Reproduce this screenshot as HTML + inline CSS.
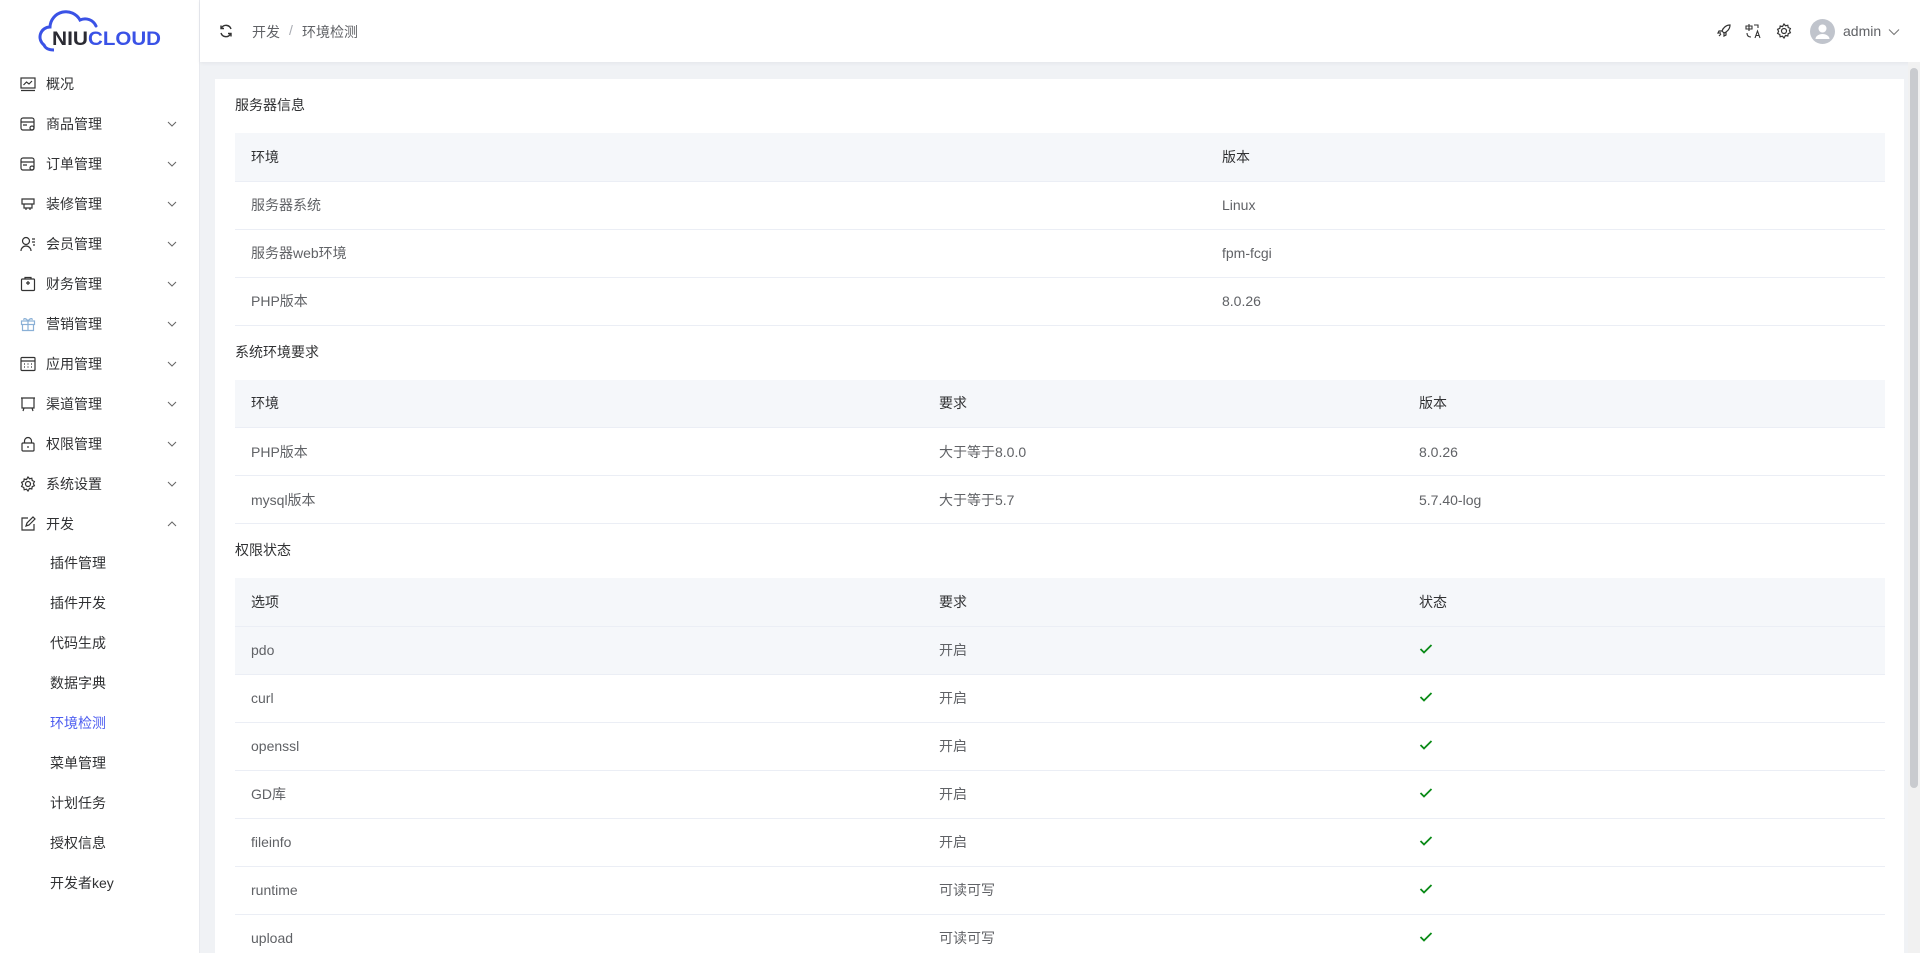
<!DOCTYPE html>
<html style="width:1920px;height:953px;overflow:hidden;background:#f0f2f5"><head><meta charset="utf-8">
<style>
*{box-sizing:border-box;margin:0;padding:0}
body{width:1920px;height:953px;overflow:hidden;background:#f0f2f5;font-family:"Liberation Sans","Noto Sans CJK SC",sans-serif;font-size:14px;color:#606266;position:relative}
.side{position:absolute;left:0;top:0;width:200px;height:953px;background:#fff;border-right:1px solid #e8eaef}
.logo{position:absolute;left:38px;top:10px;width:126px;height:42px}
.mi{position:absolute;left:0;width:199px;height:40px;line-height:40px;color:#303133}
.mi .ic{position:absolute;left:20px;top:12px;width:16px;height:16px}
.mi .t{position:absolute;left:46px}
.mi .ch{position:absolute;left:167px;top:16px;width:10px;height:8px}
.sub{position:absolute;left:50px;height:40px;line-height:40px;color:#303133}
.hdr{position:absolute;left:200px;top:0;width:1720px;height:62px;background:#fff;box-shadow:0 1px 4px rgba(0,21,41,.06)}
.card{position:absolute;left:215px;top:79px;width:1689px;height:874px;background:#fff;padding:0 19px 0 20px}
.st{height:54px;line-height:52px;color:#303133}
table{width:1650px;border-collapse:collapse;table-layout:fixed}
td,th{height:48px;padding:0 16px;text-align:left;font-weight:normal;border-bottom:1px solid #ebeef5;color:#606266}
th{background:#f5f7fa;color:#303133}
tr.hv td{background:#f5f7fa}
.ok{display:inline-block;width:14px;height:12px}
.sb{position:absolute;left:1910px;top:68px;width:8px;height:720px;background:#c9cbcf;border-radius:4px}
.sbt{position:absolute;left:1908px;top:62px;width:12px;height:891px;background:#f1f1f1}
</style></head><body>
<div class="side">
<svg class="logo" viewBox="0 0 126 42"><path d="M6 35 A10 10 0 0 1 12 17 A16 16 0 0 1 42 10 A12 12 0 0 1 58 16" fill="none" stroke="#3a52e6" stroke-width="3" stroke-linecap="round"/><path d="M6 35 Q8 40 16 40" fill="none" stroke="#3a52e6" stroke-width="3"/><text x="14" y="35" font-family="Liberation Sans" font-weight="bold" font-size="19" fill="#2b2b33" textLength="36" lengthAdjust="spacingAndGlyphs">NIU</text><text x="50" y="35" font-family="Liberation Sans" font-weight="bold" font-size="19" fill="#3a52e6" textLength="73" lengthAdjust="spacingAndGlyphs">CLOUD</text></svg>

<div class="mi" style="top:64px"><svg class="ic" viewBox="0 0 16 16" fill="none" stroke="#333" stroke-width="1.2"><rect x="1" y="2" width="14" height="10"/><path d="M1 14.5h14M3.5 9l3-3 2.5 2 3-3"/></svg><span class="t">概况</span></div>
<div class="mi" style="top:104px"><svg class="ic" viewBox="0 0 16 16" fill="none" stroke="#333" stroke-width="1.2"><rect x="1" y="2" width="13" height="12" rx="2"/><path d="M1 6h13M3 9h4"/><circle cx="12" cy="12" r="2"/></svg><span class="t">商品管理</span><svg class="ch" viewBox="0 0 10 8"><path d="M1 2l4 4 4-4" fill="none" stroke="#666"/></svg></div>
<div class="mi" style="top:144px"><svg class="ic" viewBox="0 0 16 16" fill="none" stroke="#333" stroke-width="1.2"><rect x="1" y="2" width="13" height="12" rx="2"/><path d="M1 6h13M3 9h4"/><circle cx="12" cy="12" r="2"/></svg><span class="t">订单管理</span><svg class="ch" viewBox="0 0 10 8"><path d="M1 2l4 4 4-4" fill="none" stroke="#666"/></svg></div>
<div class="mi" style="top:184px"><svg class="ic" viewBox="0 0 16 16" fill="none" stroke="#333" stroke-width="1.2"><path d="M2 3h12v5H2zM4 8v4h8V8M6 12v2M10 12v2"/></svg><span class="t">装修管理</span><svg class="ch" viewBox="0 0 10 8"><path d="M1 2l4 4 4-4" fill="none" stroke="#666"/></svg></div>
<div class="mi" style="top:224px"><svg class="ic" viewBox="0 0 16 16" fill="none" stroke="#333" stroke-width="1.2"><circle cx="6" cy="5" r="3.5"/><path d="M1 15a5 5 0 0 1 10 0M12 3h3M12 6h3M13 9h2"/></svg><span class="t">会员管理</span><svg class="ch" viewBox="0 0 10 8"><path d="M1 2l4 4 4-4" fill="none" stroke="#666"/></svg></div>
<div class="mi" style="top:264px"><svg class="ic" viewBox="0 0 16 16" fill="none" stroke="#333" stroke-width="1.2"><rect x="1.5" y="3" width="13" height="11.5" rx="1"/><path d="M5 3V1.5h6V3M8 5v4M6 7h4"/></svg><span class="t">财务管理</span><svg class="ch" viewBox="0 0 10 8"><path d="M1 2l4 4 4-4" fill="none" stroke="#666"/></svg></div>
<div class="mi" style="top:304px"><svg class="ic" viewBox="0 0 16 16" fill="none" stroke="#8ab0d6" stroke-width="1.2"><rect x="1.5" y="5" width="13" height="3.5"/><path d="M2.5 8.5v6h11v-6M8 5v9.5M8 5C6 2 3 2 4 4M8 5c2-3 5-3 4-1"/></svg><span class="t">营销管理</span><svg class="ch" viewBox="0 0 10 8"><path d="M1 2l4 4 4-4" fill="none" stroke="#666"/></svg></div>
<div class="mi" style="top:344px"><svg class="ic" viewBox="0 0 16 16" fill="none" stroke="#333" stroke-width="1.2"><rect x="1" y="1.5" width="14" height="13" rx="1"/><path d="M1 5h14M4 8h1M7.5 8h1M11 8h1M4 11h1M7.5 11h1M11 11h1"/></svg><span class="t">应用管理</span><svg class="ch" viewBox="0 0 10 8"><path d="M1 2l4 4 4-4" fill="none" stroke="#666"/></svg></div>
<div class="mi" style="top:384px"><svg class="ic" viewBox="0 0 16 16" fill="none" stroke="#333" stroke-width="1.2"><path d="M1 2h14M2 2v10h12V2M4 12l-1 3M12 12l1 3"/></svg><span class="t">渠道管理</span><svg class="ch" viewBox="0 0 10 8"><path d="M1 2l4 4 4-4" fill="none" stroke="#666"/></svg></div>
<div class="mi" style="top:424px"><svg class="ic" viewBox="0 0 16 16" fill="none" stroke="#333" stroke-width="1.2"><rect x="2" y="7" width="12" height="8" rx="1"/><path d="M4.5 7V5a3.5 3.5 0 0 1 7 0v2M8 10v2"/></svg><span class="t">权限管理</span><svg class="ch" viewBox="0 0 10 8"><path d="M1 2l4 4 4-4" fill="none" stroke="#666"/></svg></div>
<div class="mi" style="top:464px"><svg class="ic" viewBox="0 0 16 16" fill="none" stroke="#333" stroke-width="1.2"><circle cx="8" cy="8" r="2.5"/><path d="M8 1l1.5 1.8 2.3-.6.4 2.3 2.2 1-1 2.1 1 2.1-2.2 1-.4 2.3-2.3-.6L8 15l-1.5-1.8-2.3.6-.4-2.3-2.2-1 1-2.1-1-2.1 2.2-1 .4-2.3 2.3.6z"/></svg><span class="t">系统设置</span><svg class="ch" viewBox="0 0 10 8"><path d="M1 2l4 4 4-4" fill="none" stroke="#666"/></svg></div>
<div class="mi" style="top:504px"><svg class="ic" viewBox="0 0 16 16" fill="none" stroke="#333" stroke-width="1.2"><path d="M8 2H2v12h12V8M6 10l1-3 6-6 2 2-6 6z"/></svg><span class="t">开发</span><svg class="ch" viewBox="0 0 10 8"><path d="M1 6l4-4 4 4" fill="none" stroke="#666"/></svg></div>
<div class="sub" style="top:543px">插件管理</div>
<div class="sub" style="top:583px">插件开发</div>
<div class="sub" style="top:623px">代码生成</div>
<div class="sub" style="top:663px">数据字典</div>
<div class="sub" style="top:703px;color:#4c5cf0">环境检测</div>
<div class="sub" style="top:743px">菜单管理</div>
<div class="sub" style="top:783px">计划任务</div>
<div class="sub" style="top:823px">授权信息</div>
<div class="sub" style="top:863px">开发者key</div>
</div>

<div class="hdr">
<svg style="position:absolute;left:19px;top:24px" width="14" height="14" viewBox="0 0 14 14" fill="none" stroke="#333" stroke-width="1.4"><path d="M12 5A5.2 5.2 0 0 0 2.5 4M2 9a5.2 5.2 0 0 0 9.5 1"/><path d="M2 1.5V4.5h3M12 12.5V9.5H9"/></svg>
<span style="position:absolute;left:52px;top:22px;color:#606266">开发</span>
<span style="position:absolute;left:89px;top:22px;color:#a8abb2">/</span>
<span style="position:absolute;left:102px;top:22px;color:#606266">环境检测</span>
<svg style="position:absolute;left:1516px;top:23px" width="16" height="16" viewBox="0 0 16 16" fill="none" stroke="#333" stroke-width="1.2"><path d="M14 2c-4 0-7 3-8 6l2 2c3-1 6-4 6-8zM6 8L3 8 2 10h3M8 10v3l2-1v-3M3 13l2-2"/></svg>
<svg style="position:absolute;left:1545px;top:23px" width="16" height="16" viewBox="0 0 16 16" fill="none" stroke="#333" stroke-width="1.1"><path d="M1 3h6v3H1zM4 1v7M2 10c0 3 2 4 4 4M10 15l2.5-7 2.5 7M11 12.5h3M9 2h4v3"/></svg>
<svg style="position:absolute;left:1576px;top:23px" width="16" height="16" viewBox="0 0 16 16" fill="none" stroke="#333" stroke-width="1.2"><circle cx="8" cy="8" r="2.5"/><path d="M8 1l1.5 1.8 2.3-.6.4 2.3 2.2 1-1 2.1 1 2.1-2.2 1-.4 2.3-2.3-.6L8 15l-1.5-1.8-2.3.6-.4-2.3-2.2-1 1-2.1-1-2.1 2.2-1 .4-2.3 2.3.6z"/></svg>
<svg style="position:absolute;left:1610px;top:19px" width="25" height="25" viewBox="0 0 25 25"><circle cx="12.5" cy="12.5" r="12.5" fill="#c0c4cc"/><circle cx="12.5" cy="9.5" r="4" fill="#fff"/><path d="M5.5 20a7 5 0 0 1 14 0z" fill="#fff"/></svg>
<span style="position:absolute;left:1643px;top:23px;color:#606266">admin</span>
<svg style="position:absolute;left:1688px;top:28px" width="12" height="8" viewBox="0 0 12 8"><path d="M1 1.5l5 5 5-5" fill="none" stroke="#777" stroke-width="1.1"/></svg>
</div>

<div class="card">
<div class="st">服务器信息</div>
<table><colgroup><col style="width:971px"><col></colgroup>
<tr><th>环境</th><th>版本</th></tr>
<tr><td>服务器系统</td><td>Linux</td></tr>
<tr><td>服务器web环境</td><td>fpm-fcgi</td></tr>
<tr><td>PHP版本</td><td>8.0.26</td></tr>
</table>
<div class="st">系统环境要求</div>
<table><colgroup><col style="width:688px"><col style="width:480px"><col></colgroup>
<tr><th>环境</th><th>要求</th><th>版本</th></tr>
<tr><td>PHP版本</td><td>大于等于8.0.0</td><td>8.0.26</td></tr>
<tr><td>mysql版本</td><td>大于等于5.7</td><td>5.7.40-log</td></tr>
</table>
<div class="st">权限状态</div>
<table><colgroup><col style="width:688px"><col style="width:480px"><col></colgroup>
<tr><th>选项</th><th>要求</th><th>状态</th></tr>
<tr class="hv"><td>pdo</td><td>开启</td><td><svg class="ok" viewBox="0 0 14 12"><path d="M1.5 6l3.5 3.5 7.5-7.5" fill="none" stroke="#0a8a17" stroke-width="1.8"/></svg></td></tr>
<tr><td>curl</td><td>开启</td><td><svg class="ok" viewBox="0 0 14 12"><path d="M1.5 6l3.5 3.5 7.5-7.5" fill="none" stroke="#0a8a17" stroke-width="1.8"/></svg></td></tr>
<tr><td>openssl</td><td>开启</td><td><svg class="ok" viewBox="0 0 14 12"><path d="M1.5 6l3.5 3.5 7.5-7.5" fill="none" stroke="#0a8a17" stroke-width="1.8"/></svg></td></tr>
<tr><td>GD库</td><td>开启</td><td><svg class="ok" viewBox="0 0 14 12"><path d="M1.5 6l3.5 3.5 7.5-7.5" fill="none" stroke="#0a8a17" stroke-width="1.8"/></svg></td></tr>
<tr><td>fileinfo</td><td>开启</td><td><svg class="ok" viewBox="0 0 14 12"><path d="M1.5 6l3.5 3.5 7.5-7.5" fill="none" stroke="#0a8a17" stroke-width="1.8"/></svg></td></tr>
<tr><td>runtime</td><td>可读可写</td><td><svg class="ok" viewBox="0 0 14 12"><path d="M1.5 6l3.5 3.5 7.5-7.5" fill="none" stroke="#0a8a17" stroke-width="1.8"/></svg></td></tr>
<tr><td>upload</td><td>可读可写</td><td><svg class="ok" viewBox="0 0 14 12"><path d="M1.5 6l3.5 3.5 7.5-7.5" fill="none" stroke="#0a8a17" stroke-width="1.8"/></svg></td></tr>
</table>
</div>
<div class="sbt"></div><div class="sb"></div>
</body></html>
